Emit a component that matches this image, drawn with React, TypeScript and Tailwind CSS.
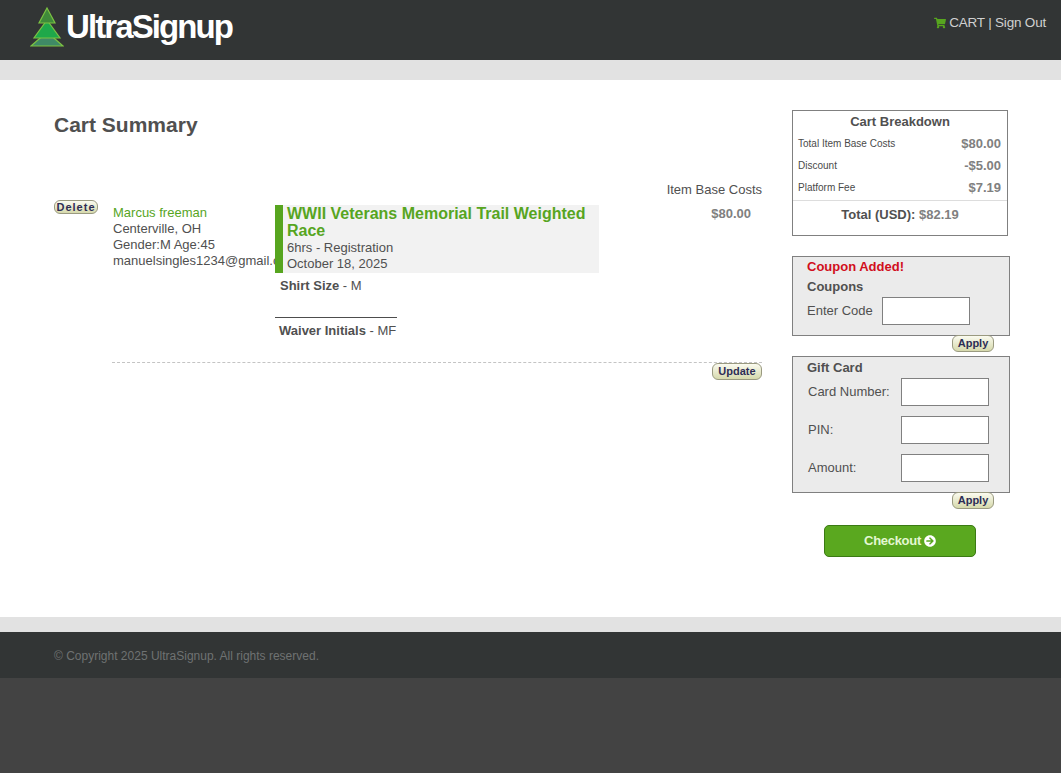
import React from "react";
import { FaShoppingCart, FaArrowCircleRight } from "react-icons/fa";

const PillButton: React.FC<{ label: string; className?: string }> = ({ label, className }) => (
  <button
    type="button"
    className={`flex items-center justify-center rounded-[6px] border border-[#9a9a80] bg-gradient-to-b from-[#fbfbf0] to-[#d6d9ac] font-['Liberation_Sans',sans-serif] text-[11px] font-bold leading-none text-[#2d2d55] ${className ?? ""}`}
  >
    {label}
  </button>
);

const BreakdownRow: React.FC<{ label: string; value: string }> = ({ label, value }) => (
  <div className="flex h-[22px] items-center justify-between pl-[5px] pr-[6px]">
    <span className="-mt-[2px] text-[10px] text-[#4a4a4a]">{label}</span>
    <span className="text-[13px] font-bold text-[#808080]">{value}</span>
  </div>
);

const GiftRow: React.FC<{ label: string }> = ({ label }) => (
  <div className="flex h-[28px] items-center justify-between pl-[15px] pr-[20px]">
    <span className="text-[13px] text-[#505050]">{label}</span>
    <input className="h-[28px] w-[88px] border border-[#808080] bg-white" />
  </div>
);

const App: React.FC = () => {
  return (
    <div className="flex min-h-[773px] flex-col bg-[#434343] font-['Liberation_Sans',Arial,sans-serif] text-[13px] text-[#505050]">
      <header className="flex h-[60px] justify-between bg-[#323535] pl-[30px] pr-[15px]">
        <div className="flex h-[47px] items-center">
          <svg width="34" height="41" viewBox="0 0 34 41" className="mt-[5px]">
            <polygon points="17,26 33,40 1,40" fill="#3f8a66" stroke="#7cc243" strokeWidth="1.2" />
            <polygon points="17,14 30,32 4,32" fill="#1fa84a" stroke="#7cc243" strokeWidth="1.2" />
            <polygon points="17,2 25,17 9,17" fill="#3f8a3a" stroke="#7cc243" strokeWidth="1.2" />
          </svg>
          <span className="ml-[2px] mt-[6px] text-[33px] font-bold tracking-[-1.9px] text-white">UltraSignup</span>
        </div>
        <div className="flex h-[46px] items-center gap-[3px] text-[13.5px] tracking-[-0.2px] text-[#d0d0d0]">
          <FaShoppingCart className="text-[12px] text-[#57a51f]" />
          <span>CART | Sign Out</span>
        </div>
      </header>
      <div className="h-[20px] bg-[#e2e2e2]" />

      <main className="flex h-[537px] bg-white pl-[54px]">
        <section className="w-[708px]">
          <h1 className="mt-[32px] h-[26px] text-[21px] font-bold leading-[26px]">Cart Summary</h1>
          <div className="mt-[43px] h-[18px] text-right leading-[18px]">Item Base Costs</div>
          <div className="relative ml-[58px] mt-[5px] flex h-[159px] border-b border-dashed border-[#c4c4c4]">
            <PillButton label="Delete" className="absolute -left-[58px] top-[-4px] h-[14px] w-[44px] text-[10px] tracking-[1px]" />
            <div className="h-full w-[163px] shrink-0 overflow-hidden whitespace-nowrap pl-px pt-px leading-[16px]">
              <div className="text-[#57a51f]">Marcus freeman</div>
              <div>Centerville, OH</div>
              <div>Gender:M Age:45</div>
              <div>manuelsingles1234@gmail.com</div>
            </div>
            <div className="w-[324px] shrink-0">
              <div className="mt-px h-[68px] border-l-[8px] border-[#57a51f] bg-[#f2f2f2] pl-[4px]">
                <div className="text-[16px] font-bold leading-[17px] text-[#57a51f]">WWII Veterans Memorial Trail Weighted Race</div>
                <div className="mt-px leading-[16px]">6hrs - Registration</div>
                <div className="leading-[16px]">October 18, 2025</div>
              </div>
              <div className="mt-[5px] pl-[5px] leading-[16px]"><b>Shirt Size</b> - M</div>
              <div className="mt-[23px] w-[122px] whitespace-nowrap border-t border-[#4d4d4d] pl-[4px] pt-[5px] leading-[16px]"><b>Waiver Initials</b> - MF</div>
            </div>
            <div className="flex-1 pr-[11px] pt-[2px] text-right font-bold leading-[16px] text-[#808080]">$80.00</div>
          </div>
          <div className="flex justify-end">
            <PillButton label="Update" className="h-[17px] w-[50px]" />
          </div>
        </section>

        <aside className="ml-[30px] w-[218px] pt-[30px]">
          <div className="h-[126px] w-[216px] border border-[#808080]">
            <div className="h-[22px] text-center font-bold leading-[22px]">Cart Breakdown</div>
            <BreakdownRow label="Total Item Base Costs" value="$80.00" />
            <BreakdownRow label="Discount" value="-$5.00" />
            <BreakdownRow label="Platform Fee" value="$7.19" />
            <div className="mt-px border-t border-[#dddddd] pt-[5px] text-center font-bold leading-[18px]">
              Total (USD): <span className="text-[#808080]">$82.19</span>
            </div>
          </div>

          <div className="mt-[20px] h-[80px] border border-[#808080] bg-[#ebebeb] pl-[14px]">
            <div className="font-bold leading-[19px] text-[#d10f1c]">Coupon Added!</div>
            <div className="mt-px font-bold leading-[20px]">Coupons</div>
            <div className="flex items-center gap-[9px]">
              <span>Enter Code</span>
              <input className="h-[28px] w-[88px] border border-[#808080] bg-white" />
            </div>
          </div>
          <div className="flex justify-end pr-[16px]">
            <PillButton label="Apply" className="-mt-px h-[17px] w-[42px]" />
          </div>

          <div className="mt-[4px] h-[137px] border border-[#808080] bg-[#ebebeb]">
            <div className="mt-px pl-[14px] font-bold leading-[20px]">Gift Card</div>
            <div className="flex flex-col gap-[10px]">
              <GiftRow label="Card Number:" />
              <GiftRow label="PIN:" />
              <GiftRow label="Amount:" />
            </div>
          </div>
          <div className="flex justify-end pr-[16px]">
            <PillButton label="Apply" className="-mt-px h-[17px] w-[42px]" />
          </div>

          <div className="mt-[16px] flex justify-center pr-[2px]">
            <button
              type="button"
              className="flex h-[32px] w-[152px] items-center justify-center gap-[3px] rounded-[5px] border border-[#3b7a14] bg-[#5aa81f] text-[13px] font-bold tracking-[-0.3px] text-[#e4f7d2]"
            >
              Checkout <FaArrowCircleRight className="text-[12px] text-white" />
            </button>
          </div>
        </aside>
      </main>

      <div className="h-[15px] bg-[#e2e2e2]" />
      <footer className="h-[46px] bg-[#323535] pl-[54px] pt-[16px] text-[12px] leading-[16px] text-[#6f7272]">
        © Copyright 2025 UltraSignup. All rights reserved.
      </footer>
    </div>
  );
};

export default App;
